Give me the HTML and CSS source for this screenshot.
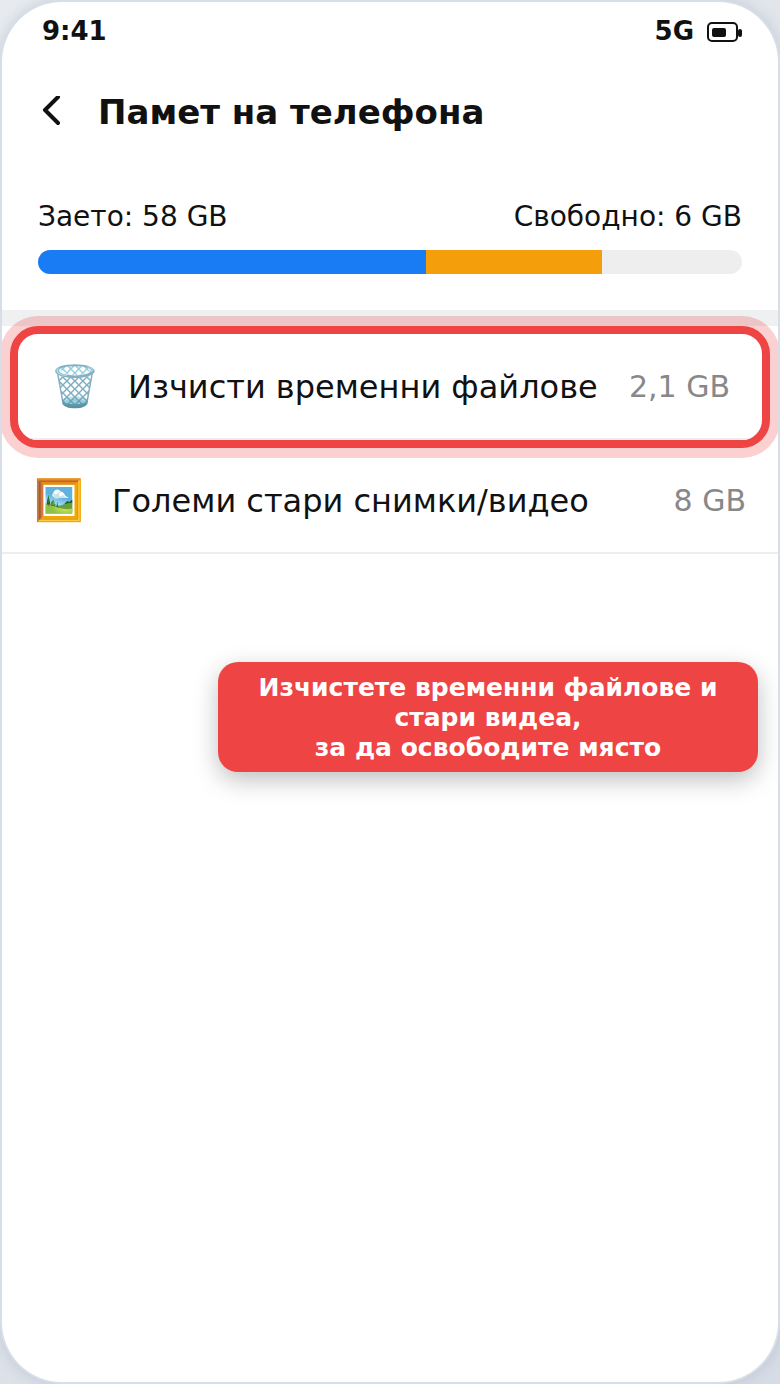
FILE: index.html
```html
<!DOCTYPE html>
<html>
  <head>
    <meta charset="utf-8">
    <title>Памет на телефона</title>
    <link rel="stylesheet" href="styles.css">
  </head>

  <body>
    <div class="phone">
      <div class="status">
        <span>9:41</span>
        <div class="status-right">
          <span>5G</span>
          <svg class="battery" width="36" height="22" viewBox="0 0 36 22">
            <rect x="2" y="3" width="29" height="18" rx="4" fill="none" stroke="#111" stroke-width="2"/>
            <rect x="6" y="8" width="14" height="9" rx="2" fill="#111"/>
            <rect x="32" y="9" width="4" height="8" rx="2" fill="#111"/>
          </svg>
        </div>
      </div>

      <div class="header">
        <svg class="back" width="20" height="32" viewBox="0 0 20 32">
          <path d="M16 1 L3 14 L16 27" fill="none" stroke="#111" stroke-width="4" stroke-linecap="round" stroke-linejoin="round"/>
        </svg>
        <h1 class="title">Памет на телефона</h1>
      </div>

      <div class="usage">
        <div class="usage-labels">
          <span>Заето: 58 GB</span>
          <span>Свободно: 6 GB</span>
        </div>
        <div class="bar">
          <div class="bar-used" style="width: 55.1%"></div>
          <div class="bar-other" style="width: 25%"></div>
        </div>
      </div>

      <div class="divider"></div>

      <div class="highlight">
        <div class="row">
          <span class="row-icon">🗑️</span>
          <span class="row-name">Изчисти временни файлове</span>
          <span class="row-size">2,1 GB</span>
        </div>
      </div>
      <div class="row">
        <span class="row-icon">🖼️</span>
        <span class="row-name">Големи стари снимки/видео</span>
        <span class="row-size">8 GB</span>
      </div>

      <div class="tip">
        Изчистете временни файлове и стари видеа,<br>
        за да освободите място
      </div>
    </div>
  </body>
</html>
```

FILE: styles.css
```css
*, *:before, *:after {
  box-sizing: border-box;
}
html, body {
  padding: 0;
  margin: 0;
}
body {
  width: 780px;
  height: 1384px;
  padding: 2px;
  font-family: "DejaVu Sans", sans-serif;
  color: #111;
  background: linear-gradient(135deg, #e8ebee 0%, #d6dce5 100%);
}
.phone {
  position: relative;
  height: 100%;
  overflow: hidden;
  border-radius: 60px;
  background: #fff;
  box-shadow: 0 0 0 2px #d8dee8, 0 0 14px 2px rgba(148, 163, 184, 0.4);
}
.status {
  display: flex;
  justify-content: space-between;
  align-items: center;
  height: 58px;
  padding: 0 36px 0 40px;
  font-size: 26px;
  font-weight: bold;
}
.status-right {
  display: flex;
  align-items: center;
  gap: 12px;
}
.header {
  display: flex;
  align-items: center;
  gap: 36px;
  height: 104px;
  padding-left: 40px;
}
.title {
  margin: 0;
  font-size: 34px;
  font-weight: bold;
}
.usage {
  padding: 38px 36px 36px;
}
.usage-labels {
  display: flex;
  justify-content: space-between;
  font-size: 28px;
  line-height: 30px;
  margin-bottom: 18px;
}
.bar {
  display: flex;
  height: 24px;
  overflow: hidden;
  border-radius: 12px;
  background: #eee;
}
.bar-used {
  background: #1a7cf5;
}
.bar-other {
  background: #f59e0b;
}
.divider {
  height: 16px;
  background: #eef0f2;
}
.highlight {
  position: relative;
  z-index: 1;
  margin: 0 8px;
  overflow: hidden;
  border: 8px solid #ef4444;
  border-radius: 28px;
  background: #fff;
  box-shadow: 0 0 0 10px rgba(239, 68, 68, 0.25);
}
.row {
  display: flex;
  align-items: center;
  height: 106px;
  padding: 0 32px 0 34px;
  border-bottom: 2px solid #eee;
}
.row-icon {
  flex: none;
  width: 78px;
  margin-left: -2px;
  font-size: 40px;
}
.row-name {
  padding-top: 2px;
  font-size: 32px;
}
.row-size {
  margin-left: auto;
  font-size: 30px;
  color: #888;
}
.tip {
  position: absolute;
  top: 660px;
  left: 216px;
  width: 540px;
  padding: 11px 24px 9px;
  border-radius: 20px;
  font-size: 25px;
  font-weight: bold;
  line-height: 30px;
  text-align: center;
  color: #fff;
  background: #ef4444;
  box-shadow: 0 8px 24px rgba(0, 0, 0, 0.25);
}
```
